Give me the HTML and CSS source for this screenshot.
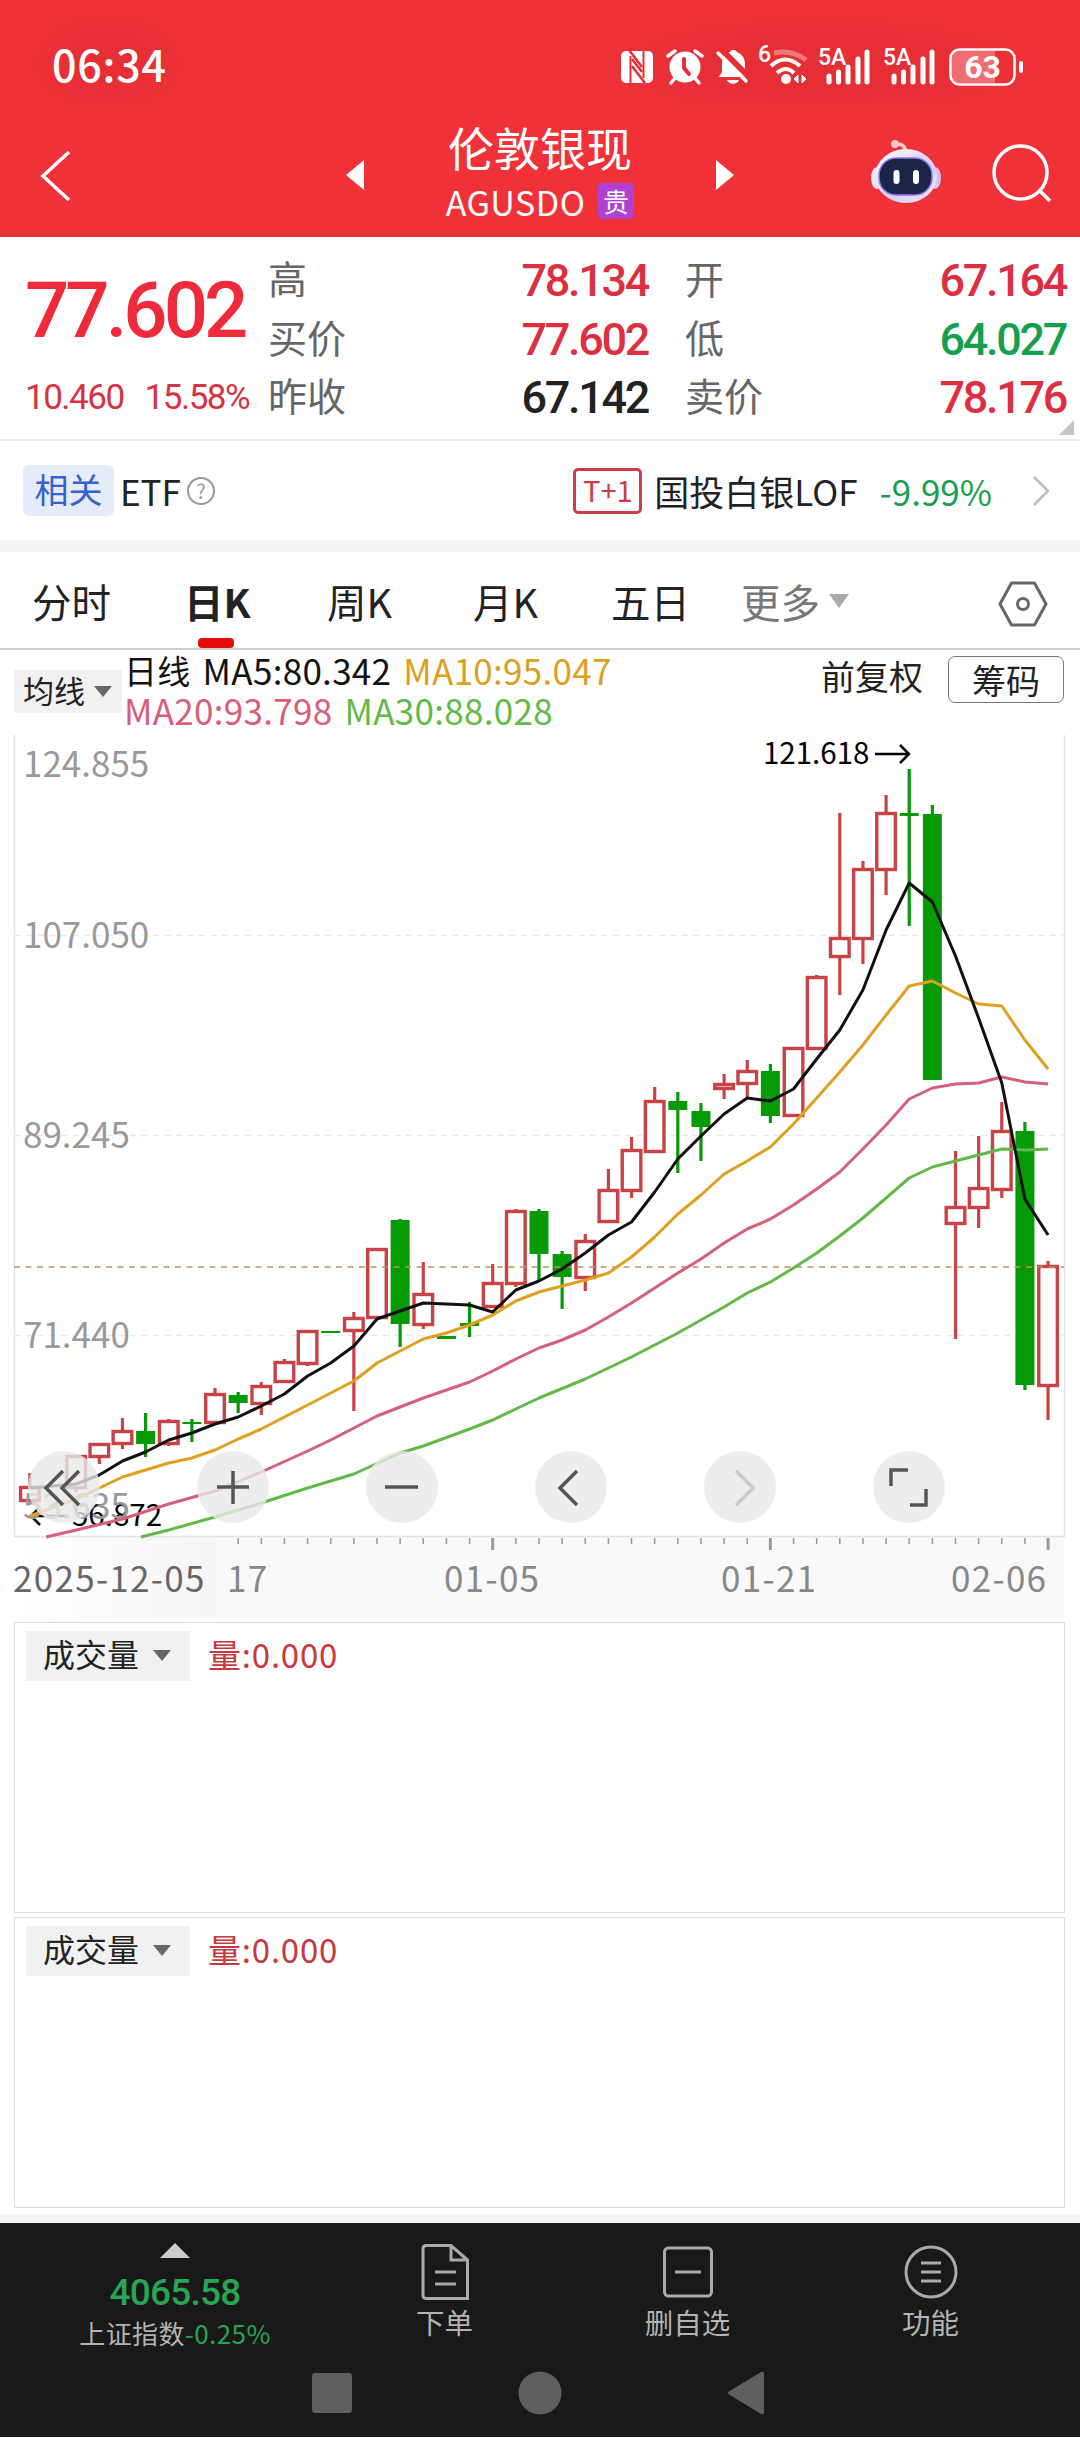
FILE: index.html
```html
<!DOCTYPE html>
<html lang="zh-CN">
<head>
    <meta charset="UTF-8">
    <meta name="viewport" content="width=device-width, initial-scale=1.0">
    <title>伦敦银现 AGUSDO</title>
    <link rel="stylesheet" href="styles.css">
</head>
<body>
    <header class="top">
        <div class="status">
            <span class="clock">06:34</span>
            <svg class="status-icons" viewBox="616 40 412 54" width="412" height="54">
                <g fill="none" stroke="#e62e34">
                    <rect x="621" y="51" width="32" height="32" rx="5" fill="#fff" stroke="none"/>
                    <path d="M630.500 56v27M643.500 51v27" stroke-width="2"/>
                    <path d="M629 50l13 17M632 66l13 17M632 59l10 13" stroke-width="2.500"/>
                </g>
                <g stroke="#fff" stroke-linecap="round" fill="none">
                    <circle cx="685" cy="67" r="15.5" fill="#fff" stroke="none"/>
                    <path d="M668 56l7-5M702 56l-7-5M675 78l-4 5M695 78l4 5" stroke-width="3.5"/>
                    <path d="M684 59v9l5 6" stroke="#e62e34" stroke-width="4"/>
                </g>
                <g fill="#fff">
                    <path d="M722 72V64c0-8 4-11 8-12 2-3 5-3 7 0 4 2 8 5 8 12v8l3 5h-29z"/>
                    <path d="M727 80h12c-2 5-10 5-12 0z"/>
                    <path d="M720 48l29 29" stroke="#e62e34" stroke-width="6"/>
                    <path d="M718 53l28 28" stroke="#fff" stroke-width="3.5" stroke-linecap="round"/>
                </g>
                <g stroke="#fff" fill="none" stroke-width="4">
                    <path d="M774 53q18-4 32 7" opacity=".35" stroke-width="5"/>
                    <path d="M771 66q14-13 29 0M777 73q9-8 17 0"/>
                    <circle cx="786" cy="79" r="5" fill="#fff" stroke="none"/>
                    <path d="M794 79l4-4v8zM802 75v8l4-4z" stroke-width="1" fill="#fff"/>
                </g>
                <text class="st-small" x="758" y="62">6</text>
                <g id="signal">
                    <text class="st-small" x="818" y="65">5A</text>
                    <path d="M829 76v6M838.500 72v10M848 67v15M858 59v23M867 52v30" stroke="#fff" stroke-width="5" stroke-linecap="round"/>
                </g>
                <use href="#signal" x="65"/>
                <rect x="950.500" y="49.500" width="64" height="35" rx="9" fill="none" stroke="#fff" stroke-width="2.500"/>
                <path d="M959 51h36v32h-36q-7 0-7-7v-18q0-7 7-7z" fill="#fff" opacity=".3"/>
                <path d="M1021 63v8" stroke="#fff" stroke-width="4" stroke-linecap="round"/>
                <text class="st-bat" x="982.500" y="78" text-anchor="middle">63</text>
            </svg>
        </div>
        <div class="title-bar">
            <svg class="back" viewBox="0 0 34 56" width="34" height="56"><path d="M30 4L4 28l26 24" fill="none" stroke="#fff" stroke-width="3.500"/></svg>
            <svg class="prev" viewBox="0 0 18 30" width="18" height="30"><path d="M18 0v30L0 15z" fill="#fff"/></svg>
            <div class="name">
                <h1>伦敦银现</h1>
                <p>AGUSDO <span class="badge">贵</span></p>
            </div>
            <svg class="next" viewBox="0 0 18 30" width="18" height="30"><path d="M0 0v30l18-15z" fill="#fff"/></svg>
            <svg class="robot" viewBox="0 0 70 64" width="70" height="64">
                <defs>
                    <linearGradient id="shell" x1="0" y1="0" x2="1" y2="1"><stop offset="0" stop-color="#fff"/><stop offset=".6" stop-color="#d9cdf7"/><stop offset="1" stop-color="#f4ecff"/></linearGradient>
                </defs>
                <path d="M25 4q9-1 10 8" fill="none" stroke="#fbc9d2" stroke-width="3.500"/>
                <circle cx="24" cy="4" r="4" fill="#fbc9d2"/>
                <ellipse cx="6" cy="38" rx="6" ry="11" fill="#e9e4fb"/>
                <ellipse cx="64" cy="38" rx="6" ry="11" fill="#cfc0f5"/>
                <ellipse cx="35" cy="36" rx="31" ry="27" fill="url(#shell)"/>
                <rect x="8" y="18" width="53" height="37" rx="17" fill="#1c2547" stroke="#8f7bea" stroke-width="1.500"/>
                <path d="M25.500 33v8M45 33v8" stroke="#fff" stroke-width="6" stroke-linecap="round"/>
            </svg>
            <svg class="search" viewBox="0 0 62 62" width="62" height="62"><g fill="none" stroke="#fff" stroke-width="3.500"><circle cx="29.500" cy="29.500" r="26.500"/><path d="M48 47l11 11"/></g></svg>
        </div>
    </header>

    <section class="quote">
        <div class="last">
            <div class="price">77.602</div>
            <div class="change"><span>10.460</span><span>15.58%</span></div>
        </div>
        <dl class="figures">
            <dt>高</dt><dd class="up">78.134</dd><dt>开</dt><dd class="up">67.164</dd>
            <dt>买价</dt><dd class="up">77.602</dd><dt>低</dt><dd class="down">64.027</dd>
            <dt>昨收</dt><dd>67.142</dd><dt>卖价</dt><dd class="up">78.176</dd>
        </dl>
        <i class="corner"></i>
    </section>

    <section class="related">
        <span class="tag">相关</span>
        <span class="etf">ETF</span>
        <span class="help">?</span>
        <span class="t1">T+1</span>
        <span class="fund">国投白银LOF</span>
        <span class="fund-change">-9.99%</span>
        <svg viewBox="0 0 18 32" width="18" height="32"><path d="M2 2l14 14L2 30" fill="none" stroke="#bbb" stroke-width="2.500"/></svg>
    </section>

    <nav class="tabs">
        <a>分时</a>
        <a class="active">日K</a>
        <a>周K</a>
        <a>月K</a>
        <a>五日</a>
        <a class="more">更多<i class="caret"></i></a>
        <svg viewBox="0 0 50 46" width="50" height="46"><g fill="none" stroke="#666" stroke-width="3"><path d="M13.500 2h23L48 23 36.500 44h-23L2 23z" stroke-linejoin="round"/><circle cx="25" cy="23" r="5.500"/></g></svg>
    </nav>

    <section class="averages">
        <button class="pick">均线<i class="caret"></i></button>
        <div class="ma">
            <div><span class="cn">日线</span><span class="ma5">MA5:80.342</span><span class="ma10">MA10:95.047</span></div>
            <div><span class="ma20">MA20:93.798</span><span class="ma30">MA30:88.028</span></div>
        </div>
        <span class="adjust">前复权</span>
        <button class="chips">筹码</button>
    </section>

    <section class="chart">
        <svg id="kline" viewBox="0 733 1080 889" width="1080" height="889">
            <defs>
                <linearGradient id="fade"><stop offset="0" stop-color="#fff"/><stop offset="1" stop-color="#f5f5f5"/></linearGradient>
            </defs>
            <rect x="14" y="1537" width="1050" height="81" fill="#f9f9f9"/>
            <rect x="14" y="1538" width="202" height="80" fill="url(#fade)"/>
            <path d="M14.500 735V1536.500H1064.500V735" fill="none" stroke="#e4e4e4" stroke-width="1.500"/>
            <path d="M15 935.500H1064M15 1135.500H1064M15 1335.500H1064" stroke="#e9e9e9" stroke-width="1.500" stroke-dasharray="6 5.500"/>
            <g class="scale">
                <text x="23" y="776.500">124.855</text>
                <text x="23" y="947.500">107.050</text>
                <text x="23" y="1147.500">89.245</text>
                <text x="23" y="1347.500">71.440</text>
            </g>
            <g id="candles"></g>
            <path d="M14 1267H1064" stroke="#b5975e" stroke-width="1.500" stroke-dasharray="6 5.500"/>
            <g class="peak">
                <text x="763" y="764">121.618</text>
                <text x="72" y="1525.500">56.872</text>
                <path d="M875 754h34M900 745l9 9-9 9M66 1516H31M40 1507l-9 9 9 9"/>
            </g>
            <g class="scale">
                <text x="23" y="1518.500">53.635</text>
            </g>
            <g id="lines" fill="none" stroke-width="3" stroke-linejoin="round"></g>
            <g id="ticks" stroke="#999"></g>
            <g class="dates">
                <text class="first" x="13" y="1591.500">2025-12-05</text>
                <text x="227" y="1591.500">17</text>
                <text x="444" y="1591.500">01-05</text>
                <text x="721" y="1591.500">01-21</text>
                <text x="951" y="1591.500">02-06</text>
            </g>
        </svg>
        <div class="controls">
            <button><svg viewBox="0 0 72 72"><path d="M35 20L18 37l17 17M51 20L34 37l17 17"/></svg></button>
            <button><svg viewBox="0 0 72 72"><path d="M20 36h32M36 20v33" stroke-width="4"/></svg></button>
            <button><svg viewBox="0 0 72 72"><path d="M19 36h33" stroke-width="4"/></svg></button>
            <button><svg viewBox="0 0 72 72"><path d="M42 20L25 37l17 17"/></svg></button>
            <button class="off"><svg viewBox="0 0 72 72"><path d="M32 20l17 17-17 17"/></svg></button>
            <button><svg viewBox="0 0 72 72"><path d="M18 35V19h17M53 38v16H37" stroke-width="4"/></svg></button>
        </div>
    </section>

    <section class="volume">
        <button class="pick">成交量<i class="caret"></i></button>
        <span>量:0.000</span>
    </section>
    <section class="volume">
        <button class="pick">成交量<i class="caret"></i></button>
        <span>量:0.000</span>
    </section>

    <footer class="bottom">
        <div class="actions">
            <div class="index">
                <i class="up-arrow"></i>
                <b>4065.58</b>
                <p>上证指数<em>-0.25%</em></p>
            </div>
            <div class="action">
                <svg viewBox="0 0 56 56" width="56" height="56"><path d="M8 1.500h25L49.500 16v38.500H8a3 3 0 0 1-3-3v-47a3 3 0 0 1 3-3zM33 1.500V16h16.500M17 28h21M17 40h21" transform="translate(1)"/></svg>
                <span>下单</span>
            </div>
            <div class="action">
                <svg viewBox="0 0 56 56" width="56" height="56"><rect x="4.500" y="4" width="47" height="48" rx="4"/><path d="M15 28h26"/></svg>
                <span>删自选</span>
            </div>
            <div class="action">
                <svg viewBox="0 0 56 56" width="56" height="56"><circle cx="28" cy="28" r="25"/><path d="M18 19h20M18 28h20M18 37h20"/></svg>
                <span>功能</span>
            </div>
        </div>
        <div class="sysnav">
            <svg viewBox="0 0 44 44" width="44" height="44"><rect x="2" y="2" width="40" height="40" rx="3"/></svg>
            <svg viewBox="0 0 44 44" width="44" height="44"><circle cx="22" cy="22" r="21.500"/></svg>
            <svg viewBox="0 0 44 44" width="44" height="44"><path d="M3 20.500L35 1q3-1 3 2v38q0 3-3 2L3 23.500q-2-1.500 0-3z"/></svg>
        </div>
    </footer>
    <script src="script.js"></script>
</body>
</html>
```
FILE: styles.css
```css
* {
    box-sizing: border-box;
}
body {
    margin: 0;
    width: 1080px;
    background: #fff;
    color: #222;
    font-family: "Noto Sans CJK SC", "Noto Sans", sans-serif;
}
h1, p, dl, dd {
    margin: 0;
    font-weight: 400;
}
svg {
    display: block;
    flex: none;
}
button {
    border: none;
    padding: 0;
    font-family: inherit;
    color: inherit;
}
.caret {
    border: 9px solid transparent;
    border-top: 11px solid #666;
    border-bottom: none;
}

/* header */
.top {
    height: 237px;
    background: #f03238;
    border-bottom: 5px solid #e53539;
    color: #fff;
}
.status {
    height: 104px;
    padding: 40px 52px 0;
    display: flex;
    justify-content: space-between;
    background:
        radial-gradient(ellipse 100px 66px at 108px 62px, #e52f35 30%, transparent),
        radial-gradient(ellipse 250px 62px at 820px 66px, #e52f35 45%, transparent);
}
.clock {
    margin-top: -2px;
    font-size: 43px;
    line-height: 50px;
    font-weight: 500;
    letter-spacing: 0.8px;
}
.st-small {
    font: 500 23px Roboto, sans-serif;
    fill: #fff;
}
.st-bat {
    font: 700 32px Roboto, sans-serif;
    fill: #fff;
}
.title-bar {
    height: 128px;
    display: flex;
    align-items: flex-start;
    padding-left: 39px;
}
.back {
    margin-top: 44px;
}
.prev {
    margin: 56px 0 0 273px;
}
.name {
    width: 352px;
    text-align: center;
}
.name h1 {
    margin-top: 15px;
    font-size: 46px;
    line-height: 54px;
}
.name p {
    display: flex;
    justify-content: center;
    align-items: center;
    gap: 13px;
    height: 46px;
    margin-top: 5px;
    font-size: 34px;
    letter-spacing: 0.5px;
}
.badge {
    width: 36px;
    height: 36px;
    border-radius: 4px;
    background: #af40d2;
    font-size: 26px;
    line-height: 35px;
}
.next {
    margin-top: 56px;
}
.robot {
    margin: 36px 0 0 137px;
}
.search {
    margin: 39px 0 0 50px;
}

/* quote */
.quote {
    position: relative;
    height: 204px;
    padding: 14px 14px 0 25px;
    display: flex;
    border-bottom: 2px solid #ececec;
}
.last {
    width: 243px;
    color: #ef2a3b;
}
.price {
    height: 117px;
    font: 500 78px/119px Roboto, sans-serif;
    letter-spacing: -4px;
}
.change {
    display: flex;
    gap: 21px;
    font: 400 35px/59px Roboto, sans-serif;
    letter-spacing: -1.5px;
    color: #d93240;
}
.figures {
    flex: 1;
    display: grid;
    grid-template-columns: 90px 290px 127px 1fr;
    grid-auto-rows: 58.5px;
    line-height: 53px;
}
.figures dt {
    font-size: 39px;
    color: #666;
    white-space: nowrap;
}
.figures dt:nth-of-type(even) {
    padding-left: 37px;
}
.figures dd {
    text-align: right;
    font: 500 45px/60px Roboto, sans-serif;
    letter-spacing: -2.3px;
}
.figures .up {
    color: #dc3040;
}
.figures .down {
    color: #14a04c;
}
.corner {
    position: absolute;
    right: 6px;
    bottom: 4px;
    border-left: 15px solid transparent;
    border-bottom: 15px solid #c4c4c4;
}

/* related fund */
.related {
    height: 111px;
    padding: 0 30px 0 23px;
    display: flex;
    align-items: center;
    border-bottom: 12px solid #f3f3f3;
    font-size: 35px;
    line-height: 46px;
}
.tag {
    width: 91px;
    height: 51px;
    border-radius: 6px;
    background: #e5ebf8;
    color: #3562cc;
    text-align: center;
    font-size: 34px;
    line-height: 47px;
}
.etf {
    margin-left: 6px;
}
.help {
    width: 28px;
    height: 28px;
    margin-left: 6px;
    border: 2px solid #999;
    border-radius: 50%;
    color: #999;
    font-size: 20px;
    line-height: 23px;
    text-align: center;
}
.t1 {
    width: 69px;
    height: 46px;
    margin-left: auto;
    border: 3px solid #c93d46;
    border-radius: 5px;
    color: #d03a44;
    font-size: 29px;
    line-height: 36px;
    text-align: center;
}
.fund {
    margin-left: 12px;
}
.fund-change {
    margin: 0 40px 0 22px;
    color: #1a9f51;
}

/* tabs */
.tabs {
    height: 98px;
    padding-left: 32px;
    display: grid;
    grid-template-columns: 152px 143px 146px 138px 130px 257px 50px;
    border-bottom: 2px solid #ccc;
    font-size: 39.5px;
    line-height: 97px;
}
.tabs a {
    justify-self: start;
    position: relative;
}
.tabs .active {
    font-weight: 700;
}
.tabs .active::after {
    content: "";
    position: absolute;
    left: 14px;
    bottom: 1px;
    width: 36px;
    height: 10px;
    border-radius: 4px;
    background: #e60c0c;
}
.tabs .more {
    display: flex;
    align-items: center;
    gap: 9px;
    color: #777;
}
.more .caret {
    border-width: 14px 10px 0;
    border-top-color: #aaa;
}
.tabs svg {
    align-self: center;
    margin-top: 6px;
}

/* moving averages */
.averages {
    height: 83px;
    padding-left: 14px;
    display: flex;
}
.pick {
    display: flex;
    align-items: center;
    background: #f1f1f1;
}
.averages .pick {
    width: 108px;
    height: 43px;
    margin-top: 20px;
    padding: 0 0 4px 9px;
    gap: 9px;
    font-size: 31px;
}
.pick .caret {
    position: relative;
    top: 2px;
}
.ma {
    padding-left: 2px;
    width: 699px;
    color: #111;
    font-size: 35px;
    letter-spacing: 0.3px;
    line-height: 40px;
}
.ma div {
    display: flex;
    gap: 12px;
}
.ma .cn {
    font-size: 33px;
}
.ma10 {
    color: #dc9f20;
}
.ma20 {
    color: #d95d78;
}
.ma30 {
    color: #62b947;
}
.adjust {
    font-size: 34px;
    line-height: 51px;
}
.chips {
    width: 116px;
    height: 47px;
    margin: 6px 0 0 25px;
    border: 1.500px solid #777;
    border-radius: 7px;
    background: #fff;
    font-size: 34px;
    line-height: 38px;
}

/* chart */
.chart {
    position: relative;
}
.scale text {
    font-size: 35px;
    fill: #999;
}
.peak text {
    font-size: 29.500px;
    fill: #000;
}
.peak path {
    fill: none;
    stroke: #000;
    stroke-width: 2.500;
}
.dates text {
    font-size: 35px;
    letter-spacing: 1.300px;
    fill: #888;
}
.dates .first {
    fill: #666;
}
.controls {
    position: absolute;
    left: 28px;
    top: 718px;
    display: flex;
    gap: 97px;
}
.controls button {
    width: 72px;
    height: 72px;
    border-radius: 50%;
    background: rgba(232, 232, 232, 0.8);
}
.controls path {
    fill: none;
    stroke: #555;
    stroke-width: 3.500;
}
.controls .off path {
    stroke: #ccc;
}

/* volume panels */
.volume {
    width: 1051px;
    height: 291px;
    margin: 0 0 4px 14px;
    padding: 8px 0 0 11px;
    display: flex;
    align-items: flex-start;
    border: 1.500px solid #dcdcdc;
    color: #c8383d;
    font-size: 33px;
    letter-spacing: 0.800px;
    line-height: 47px;
}
.volume .pick {
    width: 164px;
    height: 50px;
    margin-right: 18px;
    padding: 0 0 6px 17px;
    gap: 14px;
    color: #222;
    font-size: 32px;
}

/* bottom bar */
.bottom {
    margin-top: 6px;
    height: 223px;
    border-top: 9px solid #f3f4f4;
    background: #191919;
    color: #b3b3b3;
}
.actions {
    height: 128px;
    padding: 20px 28px 0 53px;
    display: grid;
    grid-template-columns: 270px 243px 243px 243px;
}
.index, .action {
    display: flex;
    flex-direction: column;
    align-items: center;
}
.index {
    width: 244px;
}
.up-arrow {
    border: 15px solid transparent;
    border-bottom: 15px solid #ccc;
    border-top: none;
}
.index b {
    margin-top: 12px;
    font: 500 37px/46px Roboto, sans-serif;
    letter-spacing: -0.800px;
    color: #27a553;
}
.index p {
    font-size: 26px;
    letter-spacing: 0.400px;
    line-height: 34px;
    white-space: nowrap;
}
.index em {
    font-style: normal;
    color: #27a553;
}
.action svg {
    margin-top: 1px;
    fill: none;
    stroke: #aaa;
    stroke-width: 3;
}
.action {
    font-size: 28.500px;
    line-height: 44px;
}
.sysnav {
    height: 86px;
    padding-bottom: 3px;
    display: flex;
    justify-content: center;
    align-items: center;
    gap: 164px;
    fill: #5f5f5f;
}
```
FILE: script.js
```js
const NS = 'http://www.w3.org/2000/svg';
const STEP = 23.14;
const x = i => 29.9 + STEP * i;

// [day, direction, high, body top, body bottom, low]
const candles = [
    [0, 'r', 1473, 1486, 1502, 1502], [2, 'r', 1455, 1455, 1489, 1492],
    [3, 'r', 1443, 1443, 1458, 1464], [4, 'r', 1418, 1430, 1445, 1449],
    [5, 'g', 1413, 1431, 1444, 1457], [6, 'r', 1419, 1420, 1445, 1446],
    [7, 'g', 1419, 1422, 1424, 1442], [8, 'r', 1388, 1393, 1424, 1424],
    [9, 'g', 1392, 1395, 1403, 1413], [10, 'r', 1382, 1385, 1405, 1415],
    [11, 'r', 1359, 1361, 1383, 1383], [12, 'r', 1330, 1330, 1365, 1366],
    [13, 'g', 1331, 1331, 1333, 1333], [14, 'r', 1312, 1317, 1332, 1411],
    [15, 'r', 1248, 1248, 1319, 1319], [16, 'g', 1219, 1220, 1324, 1347],
    [17, 'r', 1262, 1293, 1326, 1329], [18, 'g', 1336, 1336, 1339, 1339],
    [19, 'g', 1302, 1323, 1326, 1337], [20, 'r', 1264, 1282, 1308, 1308],
    [21, 'r', 1209, 1210, 1285, 1287], [22, 'g', 1209, 1211, 1254, 1282],
    [23, 'g', 1251, 1254, 1277, 1309], [24, 'r', 1234, 1240, 1279, 1291],
    [25, 'r', 1169, 1189, 1223, 1223], [26, 'r', 1137, 1149, 1192, 1198],
    [27, 'r', 1087, 1100, 1153, 1153], [28, 'g', 1092, 1101, 1110, 1173],
    [29, 'g', 1103, 1111, 1127, 1161], [30, 'r', 1074, 1083, 1090, 1099],
    [31, 'r', 1060, 1070, 1085, 1098], [32, 'g', 1064, 1071, 1116, 1123],
    [33, 'r', 1047, 1047, 1117, 1117], [34, 'r', 975, 976, 1050, 1050],
    [35, 'r', 813, 937, 958, 995], [36, 'r', 861, 868, 940, 964],
    [37, 'r', 795, 812, 871, 895], [38, 'g', 769, 813, 816, 926],
    [39, 'g', 805, 814, 1080, 1080], [40, 'r', 1151, 1206, 1225, 1339],
    [41, 'r', 1136, 1187, 1209, 1228], [42, 'r', 1102, 1130, 1191, 1198],
    [43, 'g', 1122, 1131, 1385, 1390], [44, 'r', 1261, 1265, 1387, 1420]
];

// [day, y] pairs, flattened
const averages = [
    { color: '#62b947', points: [4.8, 1537, 6, 1530, 8, 1517, 10, 1503, 12, 1488, 14, 1474, 16, 1453, 17, 1446, 19, 1429, 20, 1420, 21, 1409, 22, 1398, 24, 1379, 26, 1357, 28, 1333, 30, 1307, 31, 1293, 32, 1282, 33, 1268, 34, 1253, 35, 1236, 36, 1218, 37, 1198, 38, 1178, 39, 1167, 40, 1161, 41, 1155, 42, 1149, 43, 1150, 44, 1149] },
    { color: '#d4607b', points: [0.7, 1537, 2, 1530, 4, 1519, 6, 1504, 8, 1491, 10, 1472, 12, 1451, 13, 1440, 14, 1428, 15, 1416, 17, 1398, 19, 1382, 20, 1371, 21, 1359, 22, 1348, 23, 1340, 24, 1330, 25, 1317, 26, 1303, 27, 1288, 28, 1273, 29, 1259, 30, 1243, 31, 1229, 32, 1219, 33, 1205, 34, 1189, 35, 1172, 36, 1149, 37, 1125, 38, 1099, 39, 1088, 40, 1084, 41, 1083, 42, 1077, 43, 1082, 44, 1084] },
    { color: '#dfa01f', points: [0, 1516, 2, 1499, 3, 1488, 4, 1477, 6, 1463, 7, 1458, 8, 1450, 9, 1439, 10, 1429, 11, 1417, 12, 1405, 14, 1381, 15, 1363, 16, 1351, 17, 1339, 18, 1333, 19, 1325, 20, 1315, 21, 1301, 22, 1292, 23, 1286, 24, 1280, 25, 1273, 26, 1257, 27, 1237, 28, 1214, 29, 1195, 30, 1174, 31, 1161, 32, 1147, 33, 1124, 34, 1098, 35, 1072, 36, 1045, 37, 1015, 38, 986, 39, 981, 40, 993, 41, 1004, 42, 1006, 43, 1040, 44, 1069] },
    { color: '#111', points: [0, 1488, 2, 1484, 3, 1475, 4, 1461, 5, 1452, 6, 1440, 7, 1433, 8, 1424, 9, 1417, 10, 1406, 11, 1394, 12, 1376, 13, 1363, 14, 1346, 15, 1319, 16, 1311, 17, 1303, 18, 1304, 19, 1305, 20, 1312, 21, 1290, 22, 1281, 23, 1269, 24, 1253, 25, 1235, 26, 1222, 27, 1192, 28, 1159, 29, 1136, 30, 1114, 31, 1098, 32, 1101, 33, 1089, 34, 1059, 35, 1030, 36, 990, 37, 930, 38, 883, 39, 902, 40, 956, 41, 1018, 42, 1083, 43, 1199, 44, 1235] }
];

function add(parent, tag, attrs) {
    const el = document.createElementNS(NS, tag);
    for (const key in attrs) el.setAttribute(key, attrs[key]);
    document.getElementById(parent).appendChild(el);
}

candles.forEach(([i, dir, high, top, bottom, low]) => {
    const up = dir === 'r';
    const color = up ? '#c94346' : '#069a06';
    add('candles', 'path', { d: `M${x(i)} ${high}V${top}M${x(i)} ${bottom}V${low}`, stroke: color, 'stroke-width': 3.2 });
    if (up) {
        add('candles', 'rect', { x: x(i) - 9.3, y: top + 1.5, width: 18.6, height: bottom - top - 3, fill: '#fff', stroke: color, 'stroke-width': 3.4 });
    } else {
        add('candles', 'rect', { x: x(i) - 9.5, y: top, width: 19, height: bottom - top, fill: color });
    }
});

averages.forEach(({ color, points }) => {
    let d = '';
    for (let n = 0; n < points.length; n += 2) {
        d += (n ? 'L' : 'M') + x(points[n]).toFixed(1) + ' ' + points[n + 1];
    }
    add('lines', 'path', { d, stroke: color });
});

for (let i = 9; i <= 44; i++) {
    const major = i === 20 || i === 32 || i === 44;
    add('ticks', 'path', { d: `M${x(i)} 1538V${major ? 1550 : 1544}`, 'stroke-width': major ? 3 : 1.5 });
}
```
